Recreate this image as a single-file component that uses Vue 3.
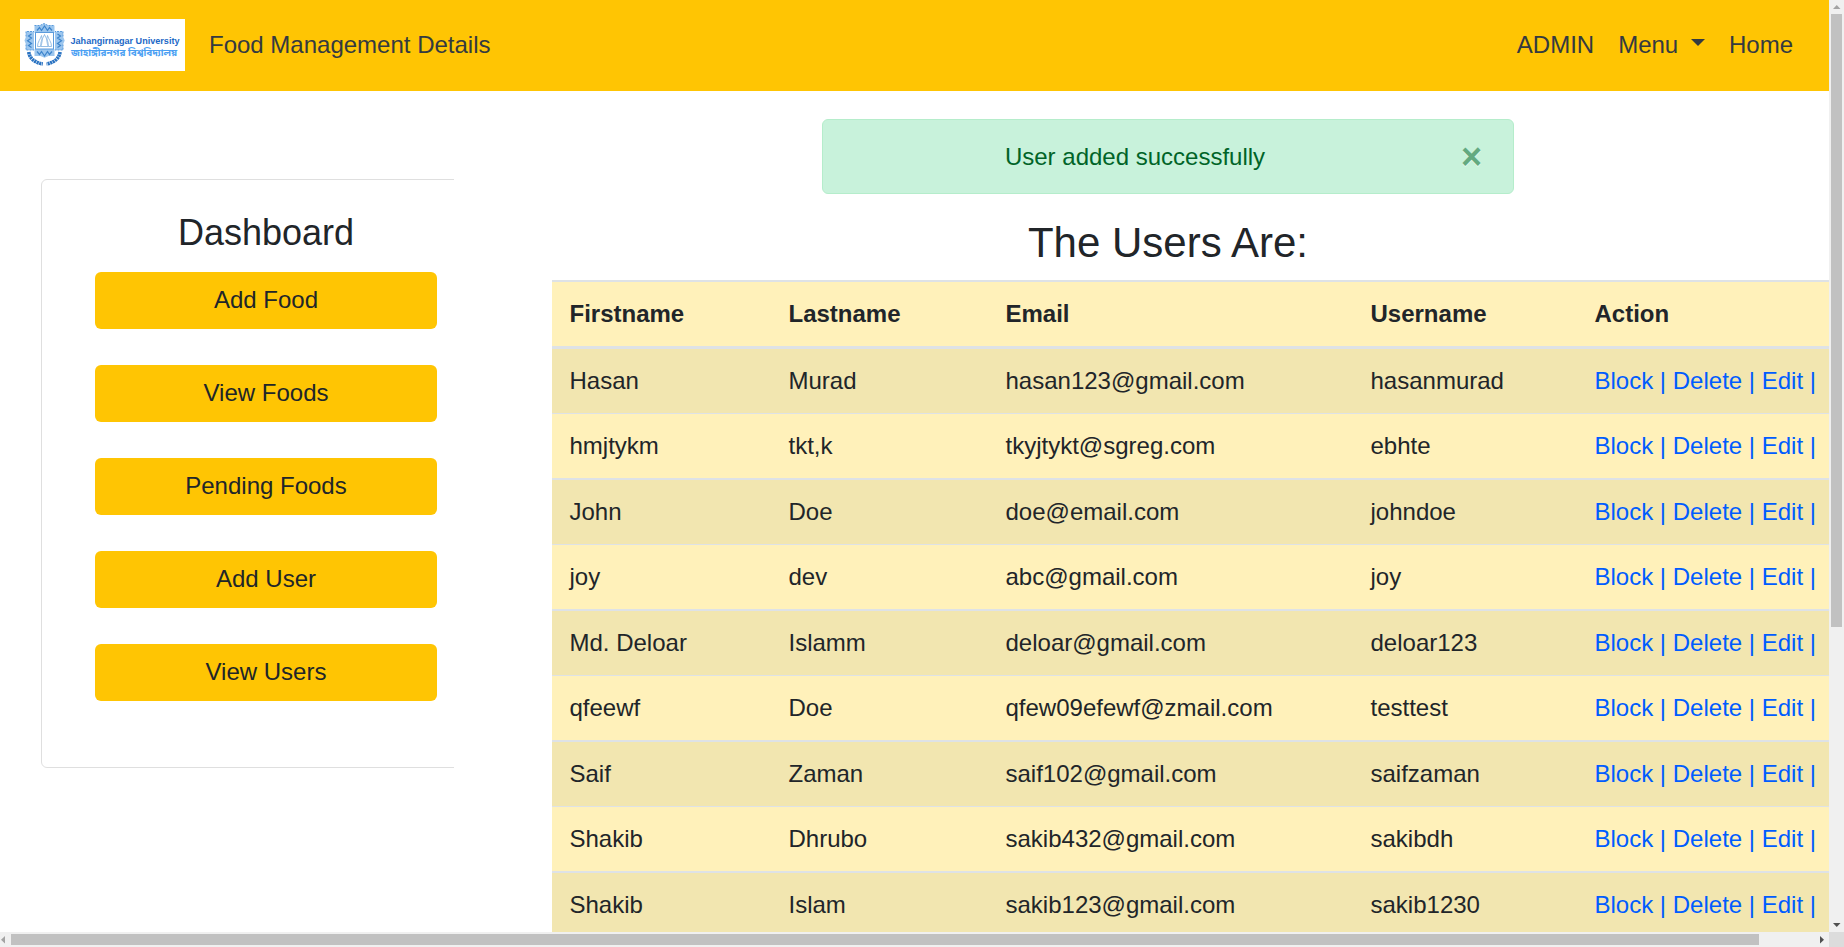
<script setup>
const menu = ['Add Food', 'View Foods', 'Pending Foods', 'Add User', 'View Users']
const columns = ['Firstname', 'Lastname', 'Email', 'Username', 'Action']
const users = [
  ['Hasan', 'Murad', 'hasan123@gmail.com', 'hasanmurad'],
  ['hmjtykm', 'tkt,k', 'tkyjtykt@sgreg.com', 'ebhte'],
  ['John', 'Doe', 'doe@email.com', 'johndoe'],
  ['joy', 'dev', 'abc@gmail.com', 'joy'],
  ['Md. Deloar', 'Islamm', 'deloar@gmail.com', 'deloar123'],
  ['qfeewf', 'Doe', 'qfew09efewf@zmail.com', 'testtest'],
  ['Saif', 'Zaman', 'saif102@gmail.com', 'saifzaman'],
  ['Shakib', 'Dhrubo', 'sakib432@gmail.com', 'sakibdh'],
  ['Shakib', 'Islam', 'sakib123@gmail.com', 'sakib1230'],
]
</script>

<template>
  <div class="frame">
    <div class="page">
      <nav class="navbar">
        <svg class="logo" viewBox="0 0 165 52" width="165" height="52">
          <rect width="165" height="52" fill="#fff" />
          <g fill="#9cc6ee">
            <path d="M14.500 6.500h5.500l4-2 4 2h6.500v7.500h-20z" />
            <path d="M14.500 30h20v7h-6l-4 1.800-4-1.800h-6z" />
            <path d="M6 12.500h8v18.500h-8v-5.500l-1.500-4 1.500-4z" />
            <path d="M35 12.500h8v5l1.700 4-1.700 4v5.500h-8z" />
          </g>
          <g fill="none" stroke="#3c84cc" stroke-width="1.200">
            <path d="M17 11.500l2.500-3 2 3 3-4.500 3 4.500 2-3 2.500 3M17 32.500l2.500 3 2-3 3 4.500 3-4.500 2 3 2.500-3" />
            <path d="M11.500 15l-3 2 3 2-4 2.700 4 2.700-3 2 3 2M37.500 15l3 2-3 2 4 2.700-4 2.700 3 2-3 2" />
          </g>
          <path d="M14.500 6.500h5.500l4-2 4 2h6.500M6 17.500v-5h8M43 17.500v-5h-8M6 25.500v5.500h8M43 25.500v5.500h-8" fill="none" stroke="#5a9bdc" stroke-dasharray="2 1" />
          <rect x="15.500" y="13.500" width="18" height="16.500" fill="#fff" stroke="#5b9bdc" />
          <path d="M17.500 27.500c0-5 3-7 4-11 1 4 1 7-1 11zM31.500 27.500c0-5-3-7-4-11-1 4-1 7 1 11zM21 27.500c-1-5 2-8 3.500-12 1.500 4 4.500 7 3.500 12z" fill="none" stroke="#7eaede" stroke-width=".8" />
          <path d="M8.800 33c.5 6 5.500 10.500 14 12M40 33c-.5 6-5.500 10.500-13.500 12" fill="none" stroke="#2a73c2" stroke-width="3.600" stroke-dasharray="2.200 .5" />
          <text x="50.500" y="25" class="logo-en" textLength="109" lengthAdjust="spacingAndGlyphs">Jahangirnagar University</text>
          <text x="51" y="36.500" class="logo-bn" textLength="106" lengthAdjust="spacingAndGlyphs">জাহাঙ্গীরনগর বিশ্ববিদ্যালয়</text>
        </svg>
        <span class="brand">Food Management Details</span>
        <div class="links">
          <a>ADMIN</a>
          <a>Menu <i class="caret"></i></a>
          <a>Home</a>
        </div>
      </nav>

      <div class="body">
        <aside class="side">
          <div class="card">
            <h4>Dashboard</h4>
            <button v-for="m in menu" :key="m" class="btn">{{ m }}</button>
          </div>
        </aside>
        <main class="main">
          <div class="alert">
            <span class="alert-text">User added successfully</span>
            <span class="close">×</span>
          </div>
          <h3>The Users Are:</h3>
          <table>
            <colgroup>
              <col class="c1" /><col class="c2" /><col class="c3" /><col class="c4" /><col class="c5" />
            </colgroup>
            <thead>
              <tr><th v-for="c in columns" :key="c">{{ c }}</th></tr>
            </thead>
            <tbody>
              <tr v-for="(u, i) in users" :key="i">
                <td v-for="(v, j) in u" :key="j">{{ v }}</td>
                <td class="actions"><a>Block | </a><a>Delete | </a><a>Edit |</a></td>
              </tr>
            </tbody>
          </table>
        </main>
      </div>
    </div>

    <div class="vbar">
      <svg width="15" height="14" viewBox="0 0 15 14"><path d="M4 9h7.500L7.750 5z" fill="#a3a3a3" /></svg>
      <div class="vthumb"></div>
      <svg class="end" width="15" height="14" viewBox="0 0 15 14"><path d="M4 5h7.500L7.750 9z" fill="#505050" /></svg>
    </div>
    <div class="hbar">
      <svg width="11" height="15" viewBox="0 0 11 15"><path d="M5 4v7.500L1 7.750z" fill="#a3a3a3" /></svg>
      <div class="hthumb"></div>
      <svg class="end" width="14" height="15" viewBox="0 0 14 15"><path d="M5 4v7.500L9 7.750z" fill="#505050" /></svg>
    </div>
    <div class="corner"></div>
  </div>
</template>

<style>
html, body { overflow: hidden; }
</style>

<style scoped>
.frame {
  display: grid;
  grid-template: 932px 15px / 1829px 15px;
  width: 1844px;
  height: 947px;
  overflow: hidden;
  font: 24px/36px "Liberation Sans", Arial, sans-serif;
  color: #212529;
  background: #fff;
}
.page { overflow: hidden; }
.navbar {
  display: flex;
  align-items: center;
  height: 91px;
  box-sizing: border-box;
  padding: 0 24px 1px 20px;
  background: #ffc503;
  color: #343a40;
}
.logo { display: block; }
.logo-en { font: bold 9.6px "Liberation Sans", sans-serif; fill: #1c68c6; }
.logo-bn { font: bold 9px "Noto Sans Bengali", "Noto Sans", sans-serif; fill: #4a9ff3; }
.brand { margin-left: 24px; }
.links { display: flex; margin-left: auto; }
.links a { padding: 0 12px; white-space: nowrap; }
.caret {
  display: inline-block;
  margin-left: 6.12px;
  vertical-align: 7px;
  border: 7.2px solid transparent;
  border-top-color: #343a40;
  border-bottom: 0;
}
.body { display: flex; align-items: flex-start; }
.side { width: 454px; flex: none; overflow: hidden; padding-top: 88px; }
.card {
  box-sizing: border-box;
  width: 470px;
  height: 589px;
  margin-left: 41px;
  padding: 31px 0 0 53px;
  border: 1px solid #dfdfdf;
  border-radius: 6px;
}
h4 { width: 342px; margin: 0 0 18px; font-size: 36px; line-height: 43px; font-weight: 400; text-align: center; }
.btn {
  display: block;
  width: 342px;
  height: 57px;
  margin: 0 0 36px;
  padding: 0 0 1px;
  border: 0;
  border-radius: 6px;
  background: #ffc503;
  color: #212529;
  font: inherit;
  text-align: center;
}
.main { width: 1322px; flex: none; margin-left: 53px; padding-top: 28px; }
.alert {
  display: flex;
  align-items: center;
  box-sizing: border-box;
  width: 692px;
  height: 75px;
  margin: 0 auto;
  padding-left: 17px;
  border: 1px solid #b5edcb;
  border-radius: 6px;
  background: #c8f2db;
  color: #006428;
}
.alert-text { flex: 1; text-align: center; }
.close { width: 83px; text-align: center; font-size: 36px; font-weight: 700; color: #006428; text-shadow: 0 1px 0 #fff; opacity: .5; }
h3 { margin: 24px 0 12px; font-size: 42px; line-height: 50px; font-weight: 400; text-align: center; }
table { table-layout: fixed; width: 1320px; margin-left: 45px; border-spacing: 0; border-collapse: separate; background: #fff1ba; }
.c1 { width: 219px; }
.c2 { width: 217px; }
.c3 { width: 365px; }
.c4 { width: 224px; }
th { padding: 14px 0 14px 17.5px; text-align: left; border-top: 2px solid #dee2e6; border-bottom: 3px solid #dee2e6; }
td { padding: 14px 0 14px 17.5px; white-space: nowrap; }
tbody tr:nth-child(odd) td { background: #f2e6b0; border-top: 2px solid #dee2e6; }
tbody tr:nth-child(even) td { border-top: 1px solid #dee2e6; }
tbody tr:first-child td { border-top: 0; }
.actions a { color: #005cff; white-space: pre; }
.vbar { display: flex; flex-direction: column; background: #f0f0f0; }
.vthumb { width: 11px; height: 613px; margin-left: 2px; background: #c1c1c1; }
.hbar { display: flex; align-items: center; background: #f0f0f0; }
.hthumb { width: 1748px; height: 11px; background: #c1c1c1; }
.vbar .end { margin-top: auto; }
.hbar .end { margin-left: auto; }
.corner { background: #dcdcdc; }
svg { flex: none; }
</style>
